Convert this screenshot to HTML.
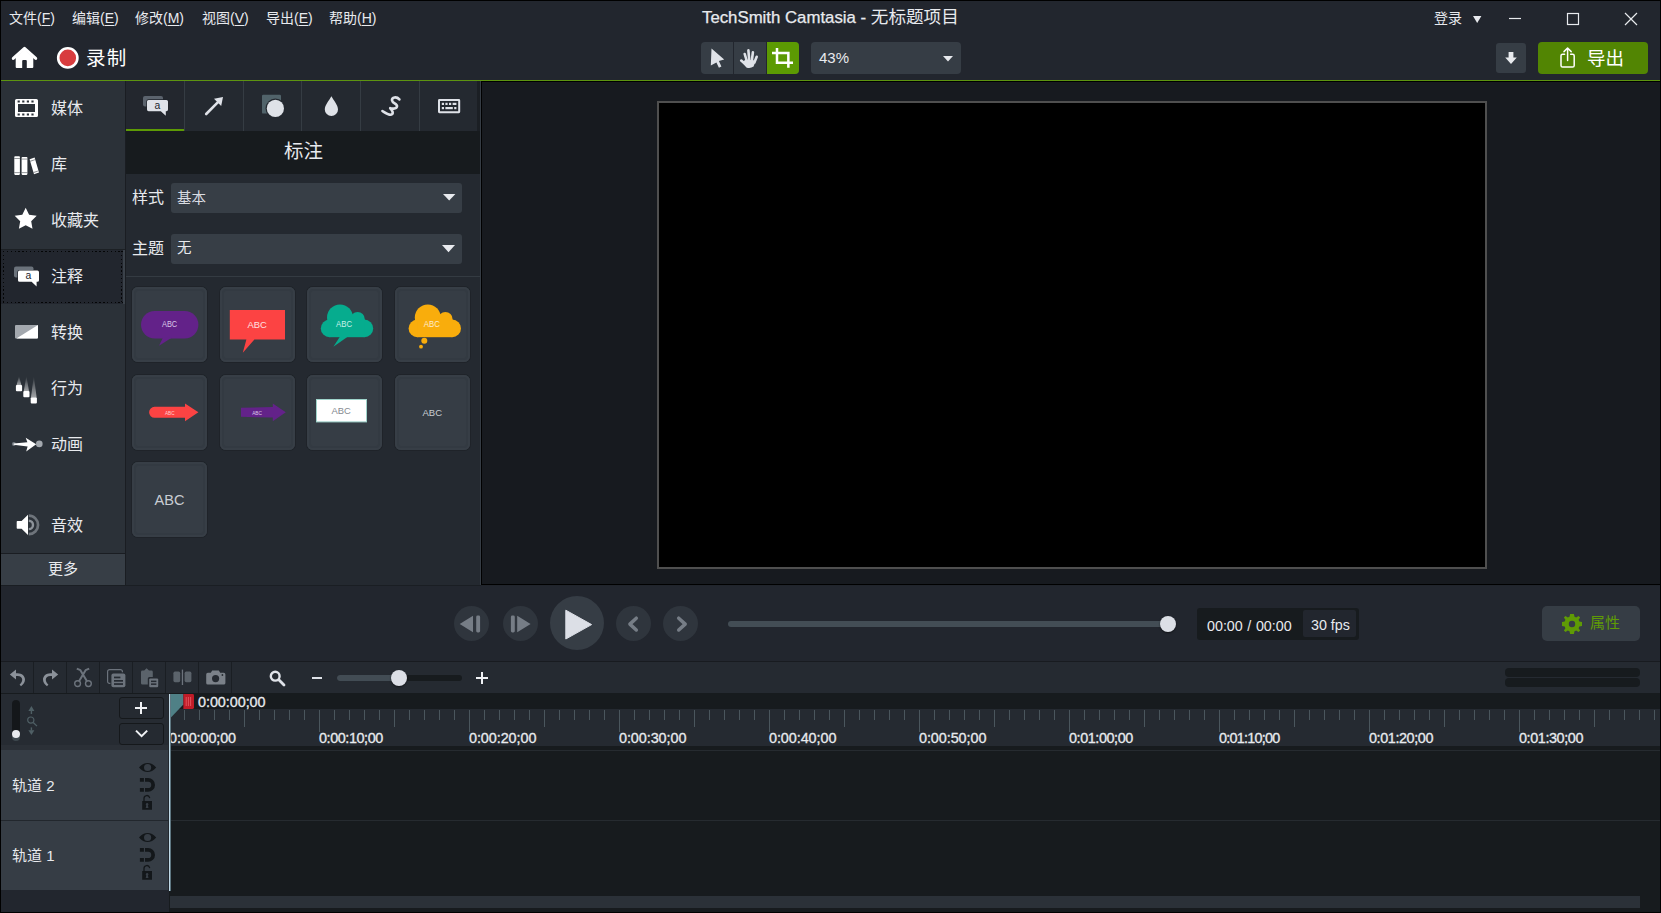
<!DOCTYPE html>
<html lang="zh-CN">
<head>
<meta charset="utf-8">
<title>TechSmith Camtasia</title>
<style>
*{box-sizing:border-box;margin:0;padding:0}
html,body{width:1661px;height:913px;overflow:hidden;background:#000}
body{font-family:"Liberation Sans","Noto Sans CJK SC",sans-serif;color:#e8eaee;position:relative}
.a{position:absolute}
.t{position:absolute;white-space:nowrap;line-height:1}
svg{position:absolute;overflow:visible}
#win{position:absolute;left:1px;top:1px;width:1659px;height:911px;background:#22262e;overflow:hidden}
#page{position:absolute;left:-1px;top:-1px;width:1661px;height:913px}
u{text-decoration:underline;text-decoration-thickness:1px;text-underline-offset:1.5px}
.menu{font-size:14px;color:#e8eaee;top:11px}
.slbl{font-size:16px;color:#e8eaee;left:51px}
.dh{height:1.2px;background:repeating-linear-gradient(90deg,#040506 0,#040506 1.4px,transparent 1.4px,transparent 3.85px)}
.dv{width:1.2px;background:repeating-linear-gradient(180deg,#040506 0,#040506 1.4px,transparent 1.4px,transparent 3.85px)}
.tsep{position:absolute;top:81px;width:1px;height:50px;background:#353c43}
.dd{position:absolute;left:171px;width:291px;height:31px;background:#373e46;border-radius:3px}
.thumb{position:absolute;width:75px;height:75px;background:#363d45;border-radius:6px;box-shadow:0 0 0 1px #1f2329,inset 0 0 0 2px #373e46,inset 0 0 0 4px #333a42}
.thumb svg{left:0;top:0}
.cbtn{position:absolute;border-radius:50%;background:#2f353d}
.tbsep{position:absolute;top:662px;width:1px;height:31px;background:#1a1e23}
.rl{font-size:14.4px;color:#e8eaee;top:731px;-webkit-text-stroke:0.3px #e8eaee}
.trk{position:absolute;left:1px;width:167px;height:70px;background:#363d45}
.tlbl{font-size:15px;color:#e8eaee;left:12px}
</style>
</head>
<body>
<div id="win"><div id="page">

<!-- ============ MENU BAR ============ -->
<div class="t menu" style="left:9px">文件(<u>F</u>)</div>
<div class="t menu" style="left:72px">编辑(<u>E</u>)</div>
<div class="t menu" style="left:135px">修改(<u>M</u>)</div>
<div class="t menu" style="left:202px">视图(<u>V</u>)</div>
<div class="t menu" style="left:266px">导出(<u>E</u>)</div>
<div class="t menu" style="left:329px">帮助(<u>H</u>)</div>
<div class="t" id="title" style="left:702px;top:9px;font-size:17.6px;color:#e8eaee"><span style="font-size:16.8px;-webkit-text-stroke:0.25px #e8eaee">TechSmith Camtasia - </span>无标题项目</div>
<div class="t" id="login" style="left:1434px;top:11px;font-size:14px">登录</div>
<svg style="left:1473px;top:16px" width="9" height="7"><path d="M0 0H8.4L4.2 7Z" fill="#e8eaee"/></svg>
<svg style="left:1500px;top:8px" width="150" height="22" fill="none" stroke="#e8eaee" stroke-width="1.2">
  <path d="M9 10.5H21"/><rect x="67.5" y="5.5" width="11" height="11"/><path d="M125 5L137 17M137 5L125 17"/>
</svg>

<!-- ============ TOOLBAR ============ -->
<svg style="left:11px;top:46px" width="27" height="23"><path d="M2.3 12.4L13.5 2.3L24.7 12.4" fill="none" stroke="#fff" stroke-width="3" stroke-linecap="round" stroke-linejoin="round"/><path d="M4.7 11.4L13.5 3.4L22.3 11.4V21A1 1 0 0 1 21.3 22H15.8V15A1 1 0 0 0 14.8 14H12.2A1 1 0 0 0 11.2 15V22H5.7A1 1 0 0 1 4.7 21Z" fill="#fff"/></svg>
<svg style="left:56px;top:46px" width="24" height="24"><circle cx="11.8" cy="11.9" r="9.6" fill="#d83c3e" stroke="#fff" stroke-width="2.6"/></svg>
<div class="t" id="rec" style="left:86px;top:49px;font-size:19.5px;color:#fff;letter-spacing:1.2px">录制</div>

<div class="a" style="left:701px;top:42px;width:98px;height:32px;background:#363d45;border-radius:4px"></div>
<div class="a" style="left:733px;top:42px;width:1px;height:32px;background:#22262e"></div>
<div class="a" style="left:766px;top:42px;width:1px;height:32px;background:#22262e"></div>
<div class="a" style="left:767px;top:42px;width:32px;height:32px;background:#5c9a03;border-radius:0 4px 4px 0"></div>
<svg style="left:708px;top:47px" width="20" height="24"><path d="M3.5 1.4L16.2 12.6L10.9 14.1L13.4 19.6L10.9 20.8L8.4 15.6L2.8 18.6Z" fill="#dfe2e8"/></svg>
<svg style="left:738px;top:46px" width="24" height="24"><g stroke="#dfe2e8" stroke-width="2.6" stroke-linecap="round" fill="none"><path d="M6.7 8L8.8 15"/><path d="M10.4 4.4L11.2 14"/><path d="M14.9 6.4L13.9 14"/><path d="M18.7 10.8L16.4 16.4"/><path d="M3.2 14.6L8.4 19"/></g><path d="M7.2 13.4L17.8 14.4L15.6 20.6Q12 23 8.4 21.4L4.6 17Z" fill="#dfe2e8"/></svg>
<svg style="left:770px;top:45px" width="26" height="26" fill="none" stroke="#fff" stroke-width="2.5"><path d="M7 2.9V17.85H23M2 7.9H18.35V22.8"/></svg>

<div class="a" style="left:811px;top:42px;width:150px;height:32px;background:#363d45;border-radius:4px"></div>
<div class="t" id="zoompct" style="left:819px;top:50px;font-size:15px;color:#e8eaee">43%</div>
<svg style="left:943px;top:56px" width="10" height="6"><path d="M0 0H10L5 5.6Z" fill="#e8eaee"/></svg>

<div class="a" style="left:1496px;top:43px;width:30px;height:30px;background:#363d45;border-radius:3px"></div>
<svg style="left:1505px;top:52px" width="12" height="13"><path d="M3.6 0H8.4V5.6H11.8L6 12L0.2 5.6H3.6Z" fill="#e8eaee"/></svg>
<div class="a" style="left:1538px;top:42px;width:110px;height:32px;background:#528503;border-radius:4px"></div>
<svg style="left:1560px;top:47px" width="16" height="22" fill="none" stroke="#fff" stroke-width="1.5" stroke-linecap="round" stroke-linejoin="round"><path d="M4.6 7.2H2.6a1.6 1.6 0 0 0-1.6 1.6V18.4a1.6 1.6 0 0 0 1.6 1.6H12.6a1.6 1.6 0 0 0 1.6-1.6V8.8a1.6 1.6 0 0 0-1.6-1.6H10.6M7.6 13.5V1.2M4 4.6L7.6 1L11.2 4.6"/></svg>
<div class="t" id="export" style="left:1587px;top:49.5px;font-size:18.5px;color:#fff">导出</div>

<!-- green line -->
<div class="a" style="left:1px;top:80px;width:1659px;height:1px;background:#5d9410"></div>

<!-- ============ SIDEBAR ============ -->
<div class="a" style="left:1px;top:81px;width:124px;height:504px;background:#2b3138"></div>
<div class="a" style="left:125px;top:81px;width:1px;height:504px;background:#1a1d22"></div>
<!-- selected item -->
<div class="a" style="left:1px;top:250px;width:122px;height:54px;background:#22262e"></div>
<div class="a" style="left:123px;top:250px;width:2px;height:54px;background:#3b424a"></div>
<div class="a" style="left:1px;top:249px;width:124px;height:1px;background:#1c2024"></div><div class="a dh" style="left:3px;top:251px;width:120px"></div><div class="a dh" style="left:3px;top:301.6px;width:120px"></div><div class="a dv" style="left:3px;top:251px;height:52px"></div><div class="a dv" style="left:121.2px;top:251px;height:52px"></div>

<!-- media -->
<svg style="left:15px;top:99px" width="23" height="18"><path fill-rule="evenodd" fill="#fff" d="M1.6 0H21.4A1.6 1.6 0 0 1 23 1.6V16.4A1.6 1.6 0 0 1 21.4 18H1.6A1.6 1.6 0 0 1 0 16.4V1.6A1.6 1.6 0 0 1 1.6 0ZM3 5V13H20V5ZM2.6 1.5V3.5H4.8V1.5ZM7.2 1.5V3.5H9.4V1.5ZM11.8 1.5V3.5H14V1.5ZM16.4 1.5V3.5H18.6V1.5ZM2.6 14.5V16.5H4.8V14.5ZM7.2 14.5V16.5H9.4V14.5ZM11.8 14.5V16.5H14V14.5ZM16.4 14.5V16.5H18.6V14.5Z"/></svg>
<div class="t slbl" style="top:101px">媒体</div>
<!-- library -->
<svg style="left:14px;top:156px" width="26" height="20"><g fill="#fff"><rect x="0.3" y="0.3" width="5.6" height="18.6" rx="0.8"/><rect x="7.6" y="1" width="5.8" height="17.9" rx="0.8"/><path d="M15.6 3.2L20.6 1.6L25 16.6L20 18.3Z"/></g><g fill="#2b3138" opacity=".55"><rect x="0.3" y="2" width="5.6" height="0.9"/><rect x="0.3" y="16.2" width="5.6" height="0.9"/><rect x="7.6" y="2.6" width="5.8" height="0.9"/><rect x="7.6" y="16.2" width="5.8" height="0.9"/><path d="M16 4.8L21 3.2L21.3 4.1L16.3 5.7ZM19.4 16L24.3 14.4L24.6 15.3L19.7 16.9Z"/></g></svg>
<div class="t slbl" style="top:157px">库</div>
<!-- favorites -->
<svg style="left:14px;top:207px" width="24" height="23"><path fill="#fff" d="M11.7 0.8L15.1 7.7L22.7 8.8L17.2 14.2L18.5 21.8L11.7 18.2L4.9 21.8L6.2 14.2L0.7 8.8L8.3 7.7Z"/></svg>
<div class="t slbl" style="top:213px">收藏夹</div>
<!-- annotations -->
<svg style="left:14px;top:266px" width="26" height="22"><rect x="0" y="0.6" width="19.5" height="11" rx="2" fill="#6b727b"/><path d="M5.6 4.6H23.4A1.6 1.6 0 0 1 25 6.2V14.2A1.6 1.6 0 0 1 23.4 15.800000000000001H22.6V20.6L17.6 15.8H5.6A1.6 1.6 0 0 1 4 14.2V6.2A1.6 1.6 0 0 1 5.6 4.6Z" fill="#fff" stroke="#22262e" stroke-width="1.4" paint-order="stroke"/><text x="14.4" y="13.2" style="font-family:'Liberation Sans',sans-serif" font-size="10.4" fill="#22262e" text-anchor="middle">a</text></svg>
<div class="t slbl" style="top:269px">注释</div>
<!-- transitions -->
<svg style="left:15px;top:325px" width="24" height="14"><rect x="0" y="0" width="23" height="13.4" rx="1" fill="#a3a8ae"/><path d="M23 0V12.4A1 1 0 0 1 22 13.4H1.4Z" fill="#fff"/></svg>
<div class="t slbl" style="top:325px">转换</div>
<!-- behaviors -->
<svg style="left:15px;top:375px" width="24" height="30"><defs><linearGradient id="gb" x1="0" y1="0" x2="0" y2="1"><stop offset="0" stop-color="#fff" stop-opacity="0"/><stop offset="1" stop-color="#fff" stop-opacity=".55"/></linearGradient></defs><path d="M4 1L6.4 10H1.6Z" fill="url(#gb)"/><path d="M11.4 1L14 16H8.8Z" fill="url(#gb)"/><path d="M18.8 1L21.6 22H16Z" fill="url(#gb)"/><rect x="0.9" y="10" width="6.2" height="6.2" rx="1" fill="#fff"/><rect x="8.3" y="16" width="6.2" height="6.2" rx="1" fill="#fff"/><rect x="15.7" y="22.2" width="6.2" height="6.2" rx="1" fill="#fff"/></svg>
<div class="t slbl" style="top:381px">行为</div>
<!-- animations -->
<svg style="left:11px;top:436px" width="33" height="17"><circle cx="2.9" cy="8" r="2" fill="#737a82"/><path d="M2.6 7.4L16.4 6.2L14.7 1.8L25.2 8.2L15.2 15.4L16.6 10.4L2.6 8.8Z" fill="#fff"/><circle cx="28.3" cy="7.9" r="3.3" fill="#a3a8ae"/></svg>
<div class="t slbl" style="top:437px">动画</div>
<!-- audio -->
<svg style="left:16px;top:514px" width="24" height="22"><path d="M1.4 7H5.6L12 0.7V21L5.6 14.8H1.4A0.7 0.7 0 0 1 0.7 14.1V7.7A0.7 0.7 0 0 1 1.4 7Z" fill="#fff"/><path d="M12.8 6.7A4.2 4.2 0 0 1 12.8 15.1" fill="none" stroke="#8d939a" stroke-width="2.4"/><path d="M12.8 1.65A9.25 9.25 0 0 1 12.8 20.15" fill="none" stroke="#6e747b" stroke-width="2.7"/></svg>
<div class="t slbl" style="top:518px">音效</div>
<!-- more -->
<div class="a" style="left:1px;top:553px;width:124px;height:1px;background:#1a1d22"></div>
<div class="a" style="left:1px;top:554px;width:124px;height:31px;background:#373e46"></div>
<div class="t" id="more" style="left:48px;top:561px;font-size:15px;color:#e8eaee">更多</div>

<!-- ============ ANNOTATION PANEL ============ -->
<div class="a" style="left:126px;top:81px;width:354px;height:504px;background:#242930"></div>
<div class="a" style="left:477px;top:81px;width:3px;height:50px;background:#1b1f24"></div>
<div class="a" style="left:480px;top:81px;width:1px;height:504px;background:#353c44"></div>
<div class="a" style="left:481px;top:81px;width:1px;height:504px;background:#000"></div>
<!-- tabs -->
<div class="a" style="left:126px;top:81px;width:58px;height:48px;background:#23272e"></div>
<div class="tsep" style="left:184px"></div><div class="tsep" style="left:243px"></div><div class="tsep" style="left:301px"></div><div class="tsep" style="left:360px"></div><div class="tsep" style="left:419px"></div>
<div class="a" style="left:126px;top:129px;width:58px;height:2px;background:#5d9a05"></div>
<!-- tab icons -->
<svg style="left:143px;top:96px" width="26" height="21"><rect x="0" y="0" width="20" height="10.6" rx="2" fill="#5b636d"/><path d="M5.6 4H23.4A1.6 1.6 0 0 1 25 5.6V13.6A1.6 1.6 0 0 1 23.4 15.2H22.8V19.8L17.8 15.2H5.6A1.6 1.6 0 0 1 4 13.6V5.6A1.6 1.6 0 0 1 5.6 4Z" fill="#dfe2e8" stroke="#21252c" stroke-width="1.4" paint-order="stroke"/><text x="14.4" y="12.6" style="font-family:'Liberation Sans',sans-serif" font-size="10.4" fill="#22262e" text-anchor="middle">a</text></svg>
<svg style="left:204px;top:95px" width="21" height="21"><path d="M2.2 19L14 7.2" stroke="#dfe2e8" stroke-width="2.6" stroke-linecap="round"/><path d="M19 2L17.2 11L10 3.8Z" fill="#dfe2e8"/></svg>
<svg style="left:262px;top:94px" width="24" height="24"><path d="M1.2 0.8H17.8A1.2 1.2 0 0 1 19 2V19.6H1.2A1.2 1.2 0 0 1 0 18.4V2A1.2 1.2 0 0 1 1.2 0.8Z" fill="#51636a"/><circle cx="13.4" cy="14.4" r="9.9" fill="#242930"/><circle cx="13.4" cy="14.4" r="8.6" fill="#dfe2e8"/></svg>
<svg style="left:324px;top:96px" width="15" height="21"><path d="M7.4 0.2C9.6 4.4 14 9 14 13.4A6.6 6.6 0 0 1 0.8 13.4C0.8 9 5.2 4.4 7.4 0.2Z" fill="#dfe2e8"/></svg>
<svg style="left:381px;top:95px" width="21" height="22" fill="none" stroke="#dfe2e8" stroke-width="2.6" stroke-linecap="round" stroke-linejoin="round"><path d="M18.4 4.4C15.6 1.2 10.6 2 11 5.4C11.400000000000001 8.4 16.6 8.6 16 11.6C15.4 14.4 10.2 13.6 9.2 13.2C11.6 15.4 12.8 18.6 10.4 19.6C8 20.4 4 17.6 1.4 16"/></svg>
<svg style="left:438px;top:99px" width="23" height="15"><path fill-rule="evenodd" fill="#dfe2e8" d="M1.4 0H20.8A1.4 1.4 0 0 1 22.2 1.4V12.8A1.4 1.4 0 0 1 20.8 14.2H1.4A1.4 1.4 0 0 1 0 12.8V1.4A1.4 1.4 0 0 1 1.4 0ZM2 2V12.2H20.2V2Z"/><g fill="#dfe2e8"><rect x="3.8" y="3.8" width="2.2" height="2.2"/><rect x="7.4" y="3.8" width="2.2" height="2.2"/><rect x="11" y="3.8" width="2.2" height="2.2"/><rect x="14.6" y="3.8" width="3.8" height="2.2"/><rect x="3.8" y="8" width="2.2" height="2.2"/><rect x="7.4" y="8" width="7.4" height="2.2"/><rect x="16.2" y="8" width="2.2" height="2.2"/></g></svg>
<!-- header -->
<div class="a" style="left:126px;top:131px;width:354px;height:43px;background:#171b1e"></div>
<div class="t" id="hdr" style="left:284px;top:142px;font-size:19.5px;color:#e8eaee">标注</div>
<!-- dropdowns -->
<div class="t" id="l1" style="left:132px;top:190px;font-size:16px;color:#e8eaee">样式</div>
<div class="dd" style="top:182.5px;height:30px"></div>
<div class="t" id="v1" style="left:177px;top:191px;font-size:14.5px;color:#d9dce2">基本</div>
<svg style="left:443px;top:194px" width="13" height="7"><path d="M0 0H12.4L6.2 6.6Z" fill="#e8eaee"/></svg>
<div class="t" id="l2" style="left:132px;top:241px;font-size:16px;color:#e8eaee">主题</div>
<div class="dd" style="top:234px;height:30px"></div>
<div class="t" id="v2" style="left:177px;top:241px;font-size:14.5px;color:#e8eaee">无</div>
<svg style="left:442px;top:245px" width="14" height="8"><path d="M0 0H13L6.5 7.2Z" fill="#e8eaee"/></svg>
<div class="a" style="left:126px;top:276px;width:354px;height:1px;background:#343b42"></div>

<!-- ============ THUMBNAILS ============ -->
<div class="thumb" style="left:132px;top:287px"><svg width="75" height="75"><rect x="9" y="24" width="57.4" height="27.4" rx="13.7" fill="#632289"/><path d="M31 50.6H40L27 58.8Z" fill="#632289"/><text x="30" y="40" textLength="15.2" lengthAdjust="spacingAndGlyphs" font-family="Liberation Sans,sans-serif" font-size="8.3" fill="#d9c8e8">ABC</text></svg></div>
<div class="thumb" style="left:220px;top:287px"><svg width="75" height="75"><path d="M9.8 23H65V52.4H34.4L22.8 65.8L26.4 52.4H9.8Z" fill="#fc4343"/><text x="27.6" y="41.2" textLength="19.3" lengthAdjust="spacingAndGlyphs" font-family="Liberation Sans,sans-serif" font-size="9.8" fill="#ffe0e0">ABC</text></svg></div>
<div class="thumb" style="left:307px;top:287px"><svg width="75" height="75"><g fill="#06ac8e"><circle cx="33" cy="30.4" r="13"/><circle cx="50.6" cy="32.2" r="7.2"/><circle cx="22.6" cy="41.4" r="8.8"/><circle cx="57.4" cy="41.4" r="8.8"/><rect x="22.6" y="34" width="34.8" height="16.2"/><path d="M33 49.6H41L26.4 59.8Z"/></g><text x="29" y="40" textLength="16" lengthAdjust="spacingAndGlyphs" font-family="Liberation Sans,sans-serif" font-size="8.3" fill="#c9f0e8">ABC</text></svg></div>
<div class="thumb" style="left:395px;top:287px"><svg width="75" height="75"><g fill="#f9ad0c"><circle cx="32.8" cy="30.4" r="13"/><circle cx="50.4" cy="32.2" r="7.2"/><circle cx="22.4" cy="41.4" r="8.8"/><circle cx="57.2" cy="41.4" r="8.8"/><rect x="22.4" y="34" width="34.8" height="16.2"/><circle cx="29.3" cy="53.7" r="3"/><circle cx="26" cy="59.7" r="1.9"/></g><text x="28.8" y="40" textLength="16" lengthAdjust="spacingAndGlyphs" font-family="Liberation Sans,sans-serif" font-size="8.3" fill="#fdeccc">ABC</text></svg></div>

<div class="thumb" style="left:132px;top:375px"><svg width="75" height="75"><path d="M22.6 31.8H53V28.4L66.4 37.3L53 46.2V42.8H22.6A5.5 5.5 0 0 1 22.6 31.8Z" fill="#fc4343"/><text x="33" y="39.5" textLength="9.6" lengthAdjust="spacingAndGlyphs" font-family="Liberation Sans,sans-serif" font-size="5.2" fill="#ffd0d0">ABC</text></svg></div>
<div class="thumb" style="left:220px;top:375px"><svg width="75" height="75"><path d="M21 32.8L52.8 32V28.4L65.8 37.3L52.8 46.2V42.6L21 41.8Z" fill="#632289"/><text x="32.2" y="39.5" textLength="9.8" lengthAdjust="spacingAndGlyphs" font-family="Liberation Sans,sans-serif" font-size="5.2" fill="#d9c8e8">ABC</text></svg></div>
<div class="thumb" style="left:307px;top:375px"><svg width="75" height="75"><rect x="9.5" y="24.5" width="50" height="22.4" fill="#fff" stroke="#9fd4cb" stroke-width="1"/><text x="24.4" y="39.1" textLength="19.3" lengthAdjust="spacingAndGlyphs" font-family="Liberation Sans,sans-serif" font-size="9.6" fill="#858a90">ABC</text></svg></div>
<div class="thumb" style="left:395px;top:375px"><svg width="75" height="75"><text x="27.5" y="40.5" textLength="19.5" lengthAdjust="spacingAndGlyphs" font-family="Liberation Sans,sans-serif" font-size="9.8" fill="#c9cdd3">ABC</text></svg></div>

<div class="thumb" style="left:132px;top:462px"><svg width="75" height="75"><text x="22.5" y="42.8" textLength="30" lengthAdjust="spacingAndGlyphs" font-family="Liberation Sans,sans-serif" font-size="14.2" fill="#c9cdd3">ABC</text></svg></div>

<!-- ============ PREVIEW ============ -->
<div class="a" style="left:482px;top:81px;width:1179px;height:504px;background:#171a1f"></div>
<div class="a" style="left:481px;top:81px;width:1180px;height:1px;background:#000"></div>
<div class="a" style="left:481px;top:584px;width:1180px;height:1px;background:#000"></div>
<div class="a" style="left:1px;top:585px;width:480px;height:1px;background:#1a1e23"></div>
<div class="a" style="left:481px;top:585px;width:1180px;height:1px;background:#20242b"></div>
<div class="a" style="left:657px;top:101px;width:830px;height:468px;background:#000;border:2px solid #4f4f4f"></div>

<!-- ============ PLAYBACK BAR ============ -->
<div class="cbtn" style="left:454px;top:606px;width:35px;height:35px"></div>
<div class="cbtn" style="left:503px;top:606px;width:35px;height:35px"></div>
<div class="cbtn" style="left:550px;top:596px;width:54px;height:54px;background:#363d45"></div>
<div class="cbtn" style="left:616px;top:606px;width:35px;height:35px"></div>
<div class="cbtn" style="left:663px;top:606px;width:35px;height:35px"></div>
<svg style="left:454px;top:606px" width="35" height="35"><path d="M5.7 18L19 9.7V26.3Z" fill="#767d86"/><rect x="22.2" y="9.6" width="3.9" height="16.8" rx="1.4" fill="#767d86"/></svg>
<svg style="left:503px;top:606px" width="35" height="35"><rect x="7.9" y="9.6" width="3.9" height="16.8" rx="1.4" fill="#767d86"/><path d="M27.6 18L14.2 9.7V26.3Z" fill="#767d86"/></svg>
<svg style="left:550px;top:596px" width="54" height="54"><path d="M15.8 14.2V43L41.6 28.6Z" fill="#dcdfe6" stroke="#dcdfe6" stroke-width="1" stroke-linejoin="round"/></svg>
<svg style="left:616px;top:606px" width="35" height="35" fill="none" stroke="#767d86" stroke-width="3.5" stroke-linecap="round" stroke-linejoin="round"><path d="M20.3 12.2L13.9 18.1L20.3 24"/></svg>
<svg style="left:663px;top:606px" width="35" height="35" fill="none" stroke="#767d86" stroke-width="3.5" stroke-linecap="round" stroke-linejoin="round"><path d="M15.7 12.2L22.2 18.1L15.7 24"/></svg>
<div class="a" style="left:728px;top:621px;width:445px;height:6px;background:#434d55;border-radius:3px"></div>
<div class="a" style="left:1160px;top:616px;width:16px;height:16px;background:#dcdfe6;border-radius:50%;box-shadow:0 1px 2px rgba(0,0,0,.5)"></div>
<div class="a" style="left:1197px;top:608px;width:162px;height:32px;background:#171b1e;border-radius:3px"></div>
<div class="a" style="left:1303px;top:610px;width:53px;height:27px;background:#22262e;border-radius:2px"></div>
<div class="t" id="tc" style="left:1207px;top:619px;font-size:14.3px;color:#e8eaee;word-spacing:0.6px">00:00 / 00:00</div>
<div class="t" id="fps" style="left:1311px;top:618px;font-size:14.3px;color:#e8eaee">30 fps</div>
<div class="a" style="left:1542px;top:606px;width:98px;height:35px;background:#363d45;border-radius:5px"></div>
<svg style="left:1562px;top:614px" width="20" height="20" viewBox="-10 -10 20 20"><path fill="#5f9b05" fill-rule="evenodd" d="M-1.9 -10H1.9L2.5 -7.3L4.2 -6.6L6.5 -8.1L8.1 -6.5L6.6 -4.2L7.3 -2.5L10 -1.9V1.9L7.3 2.5L6.6 4.2L8.1 6.5L6.5 8.1L4.2 6.6L2.5 7.3L1.9 10H-1.9L-2.5 7.3L-4.2 6.6L-6.5 8.1L-8.1 6.5L-6.6 4.2L-7.3 2.5L-10 1.9V-1.9L-7.3 -2.5L-6.6 -4.2L-8.1 -6.5L-6.5 -8.1L-4.2 -6.6L-2.5 -7.3ZM0 -3.2A3.2 3.2 0 1 0 0 3.2A3.2 3.2 0 1 0 0 -3.2Z"/></svg>
<div class="t" id="props" style="left:1590px;top:615px;font-size:15px;color:#5f9b05">属性</div>

<!-- ============ TIMELINE TOOLBAR ============ -->
<div class="a" style="left:1px;top:661px;width:1659px;height:1px;background:#181b20"></div>
<div class="a" style="left:1px;top:662px;width:1659px;height:31px;background:#252a31"></div>
<div class="tbsep" style="left:33px"></div><div class="tbsep" style="left:66px"></div><div class="tbsep" style="left:99px"></div><div class="tbsep" style="left:132px"></div><div class="tbsep" style="left:165px"></div><div class="tbsep" style="left:198px"></div><div class="tbsep" style="left:231px"></div>
<!-- undo / redo -->
<svg style="left:9px;top:669px" width="18" height="18"><path d="M0.8 5.6L7 0.6V4.2H8.6C13 4.2 16 7 16 10.6C16 13.4 14.4 15.8 12 17.2L10.6 15.4C12.2 14.4 13.2 12.6 13.2 10.8C13.2 8.600000000000001 11.4 7 8.6 7H7V10.6Z" fill="#8b9199"/></svg>
<svg style="left:42px;top:669px" width="18" height="18"><path d="M16.2 5.6L10 0.6V4.2H8.4C4 4.2 1 7 1 10.6C1 13.4 2.6 15.8 5 17.2L6.4 15.4C4.8 14.4 3.8 12.6 3.8 10.8C3.8 8.600000000000001 5.6 7 8.4 7H10V10.6Z" fill="#8b9199"/></svg>
<!-- cut -->
<svg style="left:74px;top:668px" width="19" height="20" fill="none" stroke="#6c737c"><circle cx="3.6" cy="15.6" r="2.9" stroke-width="1.4"/><circle cx="14.4" cy="15.6" r="2.9" stroke-width="1.4"/><path d="M2.8 0.6L6.4 2.2L13 13.2M15.2 0.6L11.6 2.2L5 13.2" stroke-width="2" stroke-linejoin="round"/></svg>
<!-- copy -->
<svg style="left:107px;top:669px" width="19" height="19"><path d="M3.4 14.4H2.6A2 2 0 0 1 0.6 12.4V2.6A2 2 0 0 1 2.6 0.6H13.4A2 2 0 0 1 15.4 2.6V3.2" fill="none" stroke="#6c737c" stroke-width="1.2"/><rect x="4.4" y="4.6" width="14" height="13.6" rx="2" fill="#6c737c"/><g fill="#252a31"><rect x="7" y="7.6" width="6.4" height="1.7"/><rect x="7" y="11" width="9" height="1.7"/><rect x="7" y="14.2" width="9" height="1.7"/></g></svg>
<!-- paste -->
<svg style="left:141px;top:668px" width="18" height="20"><path d="M5.6 0.2L8 2.6H10.4A1.4 1.4 0 0 1 11.8 4V9H8.4A1.6 1.6 0 0 0 6.8 10.6V16.6H1.4A1.4 1.4 0 0 1 0 15.2V4A1.4 1.4 0 0 1 1.4 2.6H3.2Z" fill="#5b636b"/><rect x="8.200000000000001" y="10.4" width="9" height="8.8" rx="1.2" fill="#6c737c"/><g fill="#252a31"><rect x="10" y="12.6" width="5.4" height="1.5"/><rect x="10" y="15.4" width="5.4" height="1.5"/></g></svg>
<!-- split -->
<svg style="left:173px;top:669px" width="19" height="17"><rect x="0.4" y="2.6" width="6.8" height="10.6" rx="1.6" fill="#5b636b"/><rect x="11.6" y="2.6" width="6.8" height="10.6" rx="1.6" fill="#5b636b"/><rect x="8.8" y="0.6" width="1.3" height="15.4" fill="#6c737c"/></svg>
<!-- camera -->
<svg style="left:206px;top:670px" width="20" height="16"><path fill-rule="evenodd" d="M6.2 0.6H12.8L14.2 2.8H17.8A1.6 1.6 0 0 1 19.4 4.4V13A1.6 1.6 0 0 1 17.8 14.6H1.8A1.6 1.6 0 0 1 0.2 13V4.4A1.6 1.6 0 0 1 1.8 2.8H4.8ZM9.6 5A3.6 3.6 0 1 0 9.6 12.2A3.6 3.6 0 1 0 9.6 5Z" fill="#7b8189"/><circle cx="16.4" cy="5" r="0.9" fill="#252a31"/></svg>
<!-- zoom -->
<svg style="left:269px;top:670px" width="17" height="17" fill="none" stroke="#dfe2e8"><circle cx="6.2" cy="6.2" r="4.4" stroke-width="2.4"/><path d="M9.8 9.8L15 15" stroke-width="2.8" stroke-linecap="round"/></svg>
<div class="a" style="left:312px;top:677px;width:10px;height:2px;background:#dfe2e8"></div>
<div class="a" style="left:337px;top:675px;width:125px;height:6px;background:#171b1e;border-radius:3px"></div>
<div class="a" style="left:337px;top:675px;width:62px;height:6px;background:#424c54;border-radius:3px 0 0 3px"></div>
<div class="a" style="left:391px;top:670px;width:16px;height:16px;background:#dcdfe6;border-radius:50%;box-shadow:0 1px 2px rgba(0,0,0,.5)"></div>
<div class="a" style="left:476px;top:677px;width:12px;height:2px;background:#f0f2f5"></div>
<div class="a" style="left:481px;top:672px;width:2px;height:12px;background:#f0f2f5"></div>
<!-- meter -->
<div class="a" style="left:1505px;top:668px;width:135px;height:9px;background:#171b1e;border-radius:4px"></div>
<div class="a" style="left:1505px;top:678px;width:135px;height:9px;background:#171b1e;border-radius:4px"></div>

<!-- ============ TIMELINE ============ -->
<div class="a" style="left:1px;top:693px;width:1659px;height:219px;background:#171b1e"></div>
<!-- left header -->
<div class="a" style="left:1px;top:694px;width:167px;height:56px;background:#262b32"></div>
<div class="a" style="left:1px;top:745px;width:167px;height:5px;background:#2b3037"></div>
<!-- ruler -->
<div class="a" style="left:169px;top:709px;width:1491px;height:37px;background:#252a31"></div>
<div class="a" style="left:169px;top:710px;width:1491px;height:10px;background:repeating-linear-gradient(90deg,#4a565d 0,#4a565d 1px,transparent 1px,transparent 15px)"></div>
<div class="a" style="left:169px;top:710px;width:1491px;height:17px;background:repeating-linear-gradient(90deg,#4a565d 0,#4a565d 1px,transparent 1px,transparent 75px)"></div>
<div class="a" style="left:169px;top:710px;width:1491px;height:22px;background:repeating-linear-gradient(90deg,#4a565d 0,#4a565d 1px,transparent 1px,transparent 150px)"></div>
<div class="t rl" style="left:169px;letter-spacing:-0.1px">0:00:00;00</div>
<div class="t rl" style="left:319px;letter-spacing:-0.42px">0:00:10;00</div>
<div class="t rl" style="left:469px;letter-spacing:-0.07px">0:00:20;00</div>
<div class="t rl" style="left:619px;letter-spacing:-0.07px">0:00:30;00</div>
<div class="t rl" style="left:769px;letter-spacing:-0.07px">0:00:40;00</div>
<div class="t rl" style="left:919px;letter-spacing:-0.07px">0:00:50;00</div>
<div class="t rl" style="left:1069px;letter-spacing:-0.42px">0:01:00;00</div>
<div class="t rl" style="left:1219px;letter-spacing:-0.75px">0:01:10;00</div>
<div class="t rl" style="left:1369px;letter-spacing:-0.4px">0:01:20;00</div>
<div class="t rl" style="left:1519px;letter-spacing:-0.4px">0:01:30;00</div>
<div class="a" style="left:169px;top:750px;width:1491px;height:1px;background:#262b30"></div>
<div class="a" style="left:169px;top:820px;width:1491px;height:1px;background:#262b30"></div>
<!-- vertical zoom -->
<div class="a" style="left:12px;top:700px;width:8px;height:41px;background:linear-gradient(180deg,#14171a 0,#14171a 88%,#3d474d 88%);border-radius:4px"></div>
<div class="a" style="left:12px;top:730px;width:8px;height:8px;background:#e8eaee;border-radius:50%"></div>
<svg style="left:27px;top:705px" width="12" height="32"><g fill="#4f5f65"><path d="M1.4 5.9H7.4L4.4 1Z"/><rect x="3.7" y="5.6" width="1.4" height="3.4"/><rect x="3.7" y="22.4" width="1.4" height="3.1"/><path d="M1.4 25.2H7.4L4.4 30.1Z"/></g><circle cx="3.8" cy="15.1" r="3.1" fill="none" stroke="#4f5f65" stroke-width="1.2"/><path d="M6.2 17.5L10 21.1" stroke="#4f5f65" stroke-width="1.3"/></svg>
<!-- add / collapse buttons -->
<div class="a" style="left:119px;top:697px;width:45px;height:22px;background:#252a31;border:1px solid #15181b;border-radius:3px"></div>
<div class="a" style="left:135px;top:707px;width:12px;height:2px;background:#f0f2f5"></div>
<div class="a" style="left:140px;top:702px;width:2px;height:12px;background:#f0f2f5"></div>
<div class="a" style="left:119px;top:723px;width:45px;height:22px;background:#252a31;border:1px solid #15181b;border-radius:3px"></div>
<svg style="left:135px;top:729px" width="14" height="10" fill="none" stroke="#f0f2f5" stroke-width="2"><path d="M1 1.6L6.6 7.2L12.2 1.6"/></svg>
<!-- tracks -->
<div class="trk" style="top:750px"></div>
<div class="a" style="left:1px;top:820px;width:167px;height:1px;background:#22272d"></div>
<div class="trk" style="top:821px;height:69px"></div>
<div class="a" style="left:1px;top:890px;width:168px;height:22px;background:#22262e"></div>
<div class="t tlbl" id="tk2" style="top:778px">轨道 2</div>
<div class="t tlbl" id="tk1" style="top:848px">轨道 1</div>
<svg style="left:139px;top:762px" width="18" height="50"><g fill="#13171a"><path fill-rule="evenodd" d="M0 5.5C2.6 2.2 5.6 0.9 8.6 0.9C11.6 0.9 14.6 2.2 17.2 5.5C14.6 8.8 11.6 10.1 8.6 10.1C5.6 10.1 2.6 8.8 0 5.5ZM8.6 1.9A3.6 3.6 0 1 0 8.6 9.1A3.6 3.6 0 1 0 8.6 1.9Z"/><path d="M0.9 16H4.9V19.8H0.9ZM0.9 26.1H4.9V29.8H0.9ZM6 16H9.1A6.9 6.9 0 0 1 9.1 29.8H6V26.1H9.1A3.15 3.15 0 0 0 9.1 19.8H6Z"/><path fill-rule="evenodd" d="M3.2 39H13V47.8H3.2ZM8.1 41A1.4 1.4 0 0 0 7.3 43.5L6.7 46H9.5L8.9 43.5A1.4 1.4 0 0 0 8.1 41Z"/></g><path d="M5 39.2V36.4A2.85 2.85 0 0 1 10.6 35.6" fill="none" stroke="#13171a" stroke-width="1.3" stroke-linecap="round"/></svg>
<svg style="left:139px;top:832px" width="18" height="50"><g fill="#13171a"><path fill-rule="evenodd" d="M0 5.5C2.6 2.2 5.6 0.9 8.6 0.9C11.6 0.9 14.6 2.2 17.2 5.5C14.6 8.8 11.6 10.1 8.6 10.1C5.6 10.1 2.6 8.8 0 5.5ZM8.6 1.9A3.6 3.6 0 1 0 8.6 9.1A3.6 3.6 0 1 0 8.6 1.9Z"/><path d="M0.9 16H4.9V19.8H0.9ZM0.9 26.1H4.9V29.8H0.9ZM6 16H9.1A6.9 6.9 0 0 1 9.1 29.8H6V26.1H9.1A3.15 3.15 0 0 0 9.1 19.8H6Z"/><path fill-rule="evenodd" d="M3.2 39H13V47.8H3.2ZM8.1 41A1.4 1.4 0 0 0 7.3 43.5L6.7 46H9.5L8.9 43.5A1.4 1.4 0 0 0 8.1 41Z"/></g><path d="M5 39.2V36.4A2.85 2.85 0 0 1 10.6 35.6" fill="none" stroke="#13171a" stroke-width="1.3" stroke-linecap="round"/></svg>
<!-- playhead -->
<div class="a" style="left:168px;top:694px;width:1px;height:197px;background:#23282e"></div>
<svg style="left:169px;top:694px" width="27" height="26"><path d="M0 0H14.4V10.4L0 25.6Z" fill="#4f8086"/><path d="M14.4 0H23.6A1.4 1.4 0 0 1 25 1.4V13.6A1.4 1.4 0 0 1 23.6 15H14.4Z" fill="#c01c28"/><path d="M17.2 3V12M19.4 3V12M21.6 3V12" stroke="#e0525c" stroke-width="1"/></svg>
<div class="a" style="left:169px;top:694px;width:1px;height:197px;background:#c0d9e6"></div><div class="a" style="left:170px;top:694px;width:1px;height:197px;background:#5e7782"></div>
<div class="t" id="ptc" style="left:198px;top:695px;font-size:14.4px;color:#e8eaee;letter-spacing:-0.05px;-webkit-text-stroke:0.3px #e8eaee">0:00:00;00</div>
<!-- scrollbar -->
<div class="a" style="left:170px;top:896px;width:1470px;height:12px;background:#2b3138"></div>

</div></div>
</body>
</html>
